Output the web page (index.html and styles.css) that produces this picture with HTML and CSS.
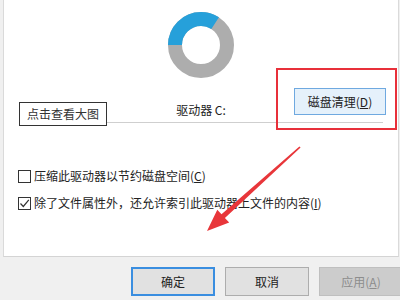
FILE: index.html
```html
<!DOCTYPE html>
<html lang="zh-CN">
<head>
    <meta charset="UTF-8">
    <meta name="viewport" content="width=device-width, initial-scale=1.0">
    <title>本地磁盘 (C:) 属性</title>
    <link rel="stylesheet" href="styles.css">
</head>
<body>
    <div class="panel">
        <svg class="donut" width="66" height="66" viewBox="0 0 66 66">
            <circle cx="33" cy="33" r="26" fill="none" stroke="#adadad" stroke-width="14"/>
            <circle cx="33" cy="33" r="26" fill="none" stroke="#26a0da" stroke-width="14"
                    stroke-dasharray="55.5 200" transform="rotate(180 33 33)"/>
        </svg>

        <div class="drive-row">
            <span class="drive-label">驱动器 C:</span>
            <button class="btn-clean">磁盘清理(<u>D</u>)</button>
        </div>
        <div class="separator"></div>

        <div class="options">
            <label class="option">
                <span class="box"></span>
                <span>压缩此驱动器以节约磁盘空间(<u>C</u>)</span>
            </label>
            <label class="option">
                <span class="box">
                    <svg width="11" height="11" viewBox="0 0 11 11">
                        <path d="M1.5 5.5 L4.3 8.5 L9.8 1.8" fill="none" stroke="#333" stroke-width="1.2"/>
                    </svg>
                </span>
                <span>除了文件属性外，还允许索引此驱动器上文件的内容(<u>I</u>)</span>
            </label>
        </div>
    </div>

    <div class="footer">
        <button class="btn btn-default">确定</button>
        <button class="btn">取消</button>
        <button class="btn btn-disabled">应用(<u>A</u>)</button>
    </div>

    <!-- annotations drawn over the dialog -->
    <div class="tooltip">点击查看大图</div>
    <div class="highlight"></div>
    <svg class="arrow" width="400" height="300" viewBox="0 0 400 300">
        <polygon fill="#e8363a"
                 points="299.4,146.4 221.5,214.3 217.3,209.8 207,231 229.2,222.6 224.9,217.9 300.6,147.6"/>
    </svg>
</body>
</html>
```

FILE: styles.css
```css
body {
    margin: 0;
    width: 400px;
    height: 300px;
    overflow: hidden;
    position: relative;
    background: #f0f0f0;
    font-family: "Microsoft YaHei", "Noto Sans CJK SC", sans-serif;
    font-size: 12px;
    color: #222;
}

.panel {
    margin-left: 3px;
    width: 394px;
    height: 256px;
    background: #fff;
    border-left: 1px solid #dadada;
    border-right: 1px solid #dadada;
    border-bottom: 1px solid #d4d4d4;
    display: flex;
    flex-direction: column;
}

.donut {
    display: block;
    margin: 12px auto 0;
}

.drive-row {
    display: grid;
    grid-template-columns: 1fr auto 1fr;
    height: 27px;
    margin-top: 10px;
    padding: 0 12px;
}

.drive-label {
    grid-column: 2;
    align-self: end;
    line-height: 16px;
    margin-bottom: -3px;
}

.btn-clean {
    grid-column: 3;
    justify-self: end;
    width: 92px;
    height: 27px;
    padding: 0;
    background: #e5f1fb;
    border: 1px solid #6fa9e0;
    font-family: inherit;
    font-size: 12px;
    color: #222;
}

.separator {
    height: 1px;
    margin: 7px 15px 0;
    background: #cfcfcf;
}

.options {
    display: flex;
    flex-direction: column;
    gap: 11px;
    margin: 45px 0 0 14px;
}

.option {
    display: flex;
    align-items: center;
    gap: 3px;
    line-height: 16px;
}

.box {
    width: 11px;
    height: 11px;
    border: 1px solid #333;
    background: #fff;
    display: flex;
}

.footer {
    display: flex;
    justify-content: flex-end;
    gap: 10px;
    margin-right: -3px;
    padding-top: 10px;
}

.btn {
    flex-shrink: 0;
    width: 84px;
    height: 29px;
    padding: 0;
    background: #e1e1e1;
    border: 1px solid #adadad;
    font-family: inherit;
    font-size: 12px;
    color: #222;
}

.btn-default {
    border: 2px solid #3a8ee0;
}

.btn-disabled {
    background: #cccccc;
    border-color: #bfbfbf;
    color: #8d8d8d;
}

.tooltip {
    position: absolute;
    left: 19px;
    top: 102px;
    height: 22px;
    padding: 0 7px;
    line-height: 22px;
    background: #fff;
    border: 1px solid #333;
    color: #333;
}

.highlight {
    position: absolute;
    left: 276px;
    top: 68px;
    width: 117px;
    height: 58px;
    border: 2px solid #e8303a;
}

.arrow {
    position: absolute;
    left: 0;
    top: 0;
    pointer-events: none;
}
```
